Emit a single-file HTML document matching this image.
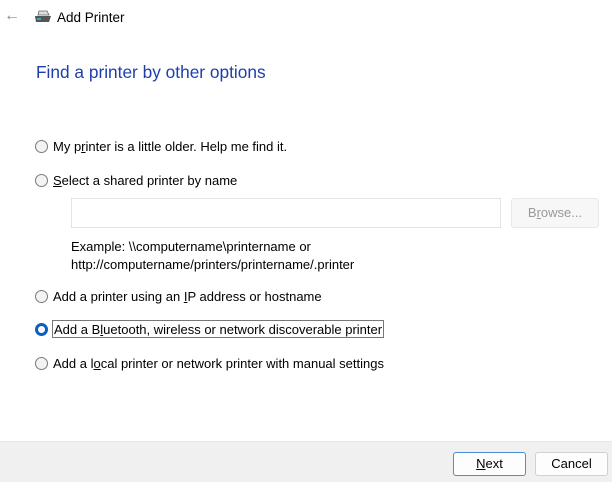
<!DOCTYPE html>
<html><head><style>
body{margin:0;width:612px;height:481px;background:#fff;font-family:"Liberation Sans",sans-serif;font-size:13px;color:#000;position:relative;overflow:hidden}
.a{position:absolute;white-space:nowrap}
.r{position:absolute;width:13px;height:13px;border:1px solid #7a7a7a;border-radius:50%;background:#f3f3f3;box-sizing:border-box}
.t{position:absolute;white-space:nowrap;line-height:15px}
u{text-decoration:underline}
.btn{position:absolute;height:24px;box-sizing:border-box;border:1px solid #d0d0d0;border-radius:3px;background:#fdfdfd;text-align:center;line-height:22px;font-size:13px}
</style></head><body>
<div class="a" style="left:4px;top:7px;color:#888;font-size:16px">&#8592;</div>
<svg class="a" style="left:34px;top:10px" width="18" height="14" viewBox="0 0 18 14"><path d="M5 1h8l2 4H4z" fill="#ddd" stroke="#666" stroke-width=".8"/><path d="M1 6h16l-2 6H2z" fill="#555"/><rect x="3" y="8" width="4" height="2" fill="#3ab"/></svg>
<div class="a" style="left:57px;top:10px;font-size:13.5px">Add Printer</div>
<div class="a" style="left:36px;top:62px;font-size:17.3px;color:#1d3fae">Find a printer by other options</div>

<div class="r" style="left:35px;top:140px"></div><div class="t" style="left:53px;top:139px">My p<u>r</u>inter is a little older. Help me find it.</div>
<div class="r" style="left:35px;top:174px"></div><div class="t" style="left:53px;top:173px"><u>S</u>elect a shared printer by name</div>
<div class="a" style="left:71px;top:198px;width:430px;height:30px;border:1px solid #e3e3e3;box-sizing:border-box"></div>
<div class="a" style="left:511px;top:198px;width:88px;height:30px;border:1px solid #e8e8e8;background:#f7f7f7;border-radius:3px;box-sizing:border-box;text-align:center;line-height:28px;color:#999">B<u>r</u>owse...</div>
<div class="t" style="left:71px;top:239px">Example: \\computername\printername or</div>
<div class="t" style="left:71px;top:257px">http://computername/printers/printername/.printer</div>
<div class="r" style="left:35px;top:290px"></div><div class="t" style="left:53px;top:289px">Add a printer using an <u>I</u>P address or hostname</div>
<div class="r" style="left:35px;top:323px;border:3.5px solid #0a5fc0;background:#fff"></div><div class="t" style="left:52px;top:320px;border:1px solid #777;padding:1px 1px 0;line-height:15px">Add a B<u>l</u>uetooth, wireless or network discoverable printer</div>
<div class="r" style="left:35px;top:357px"></div><div class="t" style="left:53px;top:356px">Add a l<u>o</u>cal printer or network printer with manual settings</div>

<div class="a" style="left:0;top:441px;width:612px;height:40px;background:#f0f0f0;border-top:1px solid #e5e5e5"></div>
<div class="btn" style="left:453px;top:452px;width:73px;border-color:#4a8fd8"><u>N</u>ext</div>
<div class="btn" style="left:535px;top:452px;width:73px">Cancel</div>
</body></html>
